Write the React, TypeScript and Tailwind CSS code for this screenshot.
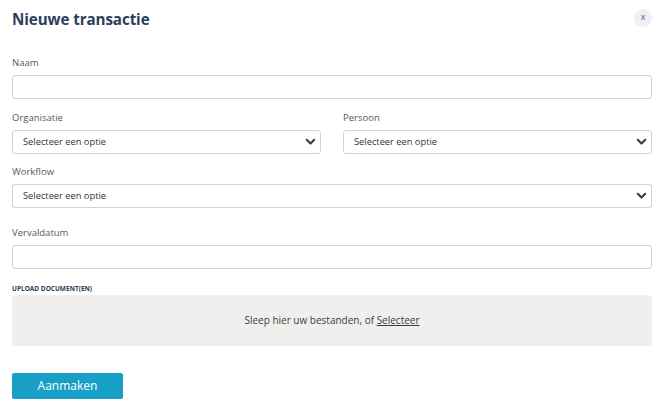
import React from "react";

function Chevron() {
  return (
    <svg width="11" height="8" viewBox="0 0 11 8" className="shrink-0">
      <path d="M1.8 1.8 L5.5 5.5 L9.2 1.8" fill="none" stroke="#3a3f47" strokeWidth="2.2" strokeLinecap="round" strokeLinejoin="round" />
    </svg>
  );
}

function Select() {
  return (
    <div className="flex h-[24px] items-center justify-between rounded-[3px] border border-[#cfd3d8] bg-white pl-[10px] pr-[4px]">
      <span className="text-[9.3px] text-[#333]">Selecteer een optie</span>
      <Chevron />
    </div>
  );
}

function Label({ children }: { children: React.ReactNode }) {
  return <div className="mb-[6px] text-[9.5px] leading-[13px] text-[#505a68]">{children}</div>;
}

export default function App() {
  return (
    <div className="h-[417px] w-[667px] bg-white px-[12px] pt-[8px]" style={{ fontFamily: '"Open Sans", "Noto Sans", sans-serif' }}>
      <div className="flex items-start justify-between">
        <h1 className="text-[15.2px] font-bold leading-[22px] tracking-[-0.1px] text-[#2c3e5c]">Nieuwe transactie</h1>
        <div className="mr-[3px] mt-[1px] flex h-[18px] w-[18px] items-center justify-center rounded-full bg-[#edf0f4] pb-[1px] text-[8.5px] leading-none text-[#4a5a84]">x</div>
      </div>

      <div className="mt-[26px]">
        <Label>Naam</Label>
        <div className="h-[24px] w-[640px] rounded-[3px] border border-[#cfd3d8]"></div>
      </div>

      <div className="mt-[12px] grid w-[640px] grid-cols-2 gap-x-[22px]">
        <div>
          <Label>Organisatie</Label>
          <Select />
        </div>
        <div>
          <Label>Persoon</Label>
          <Select />
        </div>
      </div>

      <div className="mt-[11px] w-[640px]">
        <Label>Workflow</Label>
        <Select />
      </div>

      <div className="mt-[18px] w-[640px]">
        <Label>Vervaldatum</Label>
        <div className="h-[24px] rounded-[3px] border border-[#cfd3d8]"></div>
      </div>

      <div className="mt-[16px] w-[640px]">
        <div className="text-[6.5px] font-bold leading-[8px] text-[#2c3e5c]">UPLOAD DOCUMENT(EN)</div>
        <div className="mt-[2px] flex h-[51px] items-center justify-center rounded-[4px] bg-[#f0efee] text-[10px] text-[#3c3c3c]">
          <span>
            Sleep hier uw bestanden, of <span className="underline">Selecteer</span>
          </span>
        </div>
      </div>

      <button className="mt-[27px] flex h-[26px] w-[111px] items-center justify-center rounded-[2px] bg-[#189fc6] text-[12px] text-white">
        Aanmaken
      </button>
    </div>
  );
}
